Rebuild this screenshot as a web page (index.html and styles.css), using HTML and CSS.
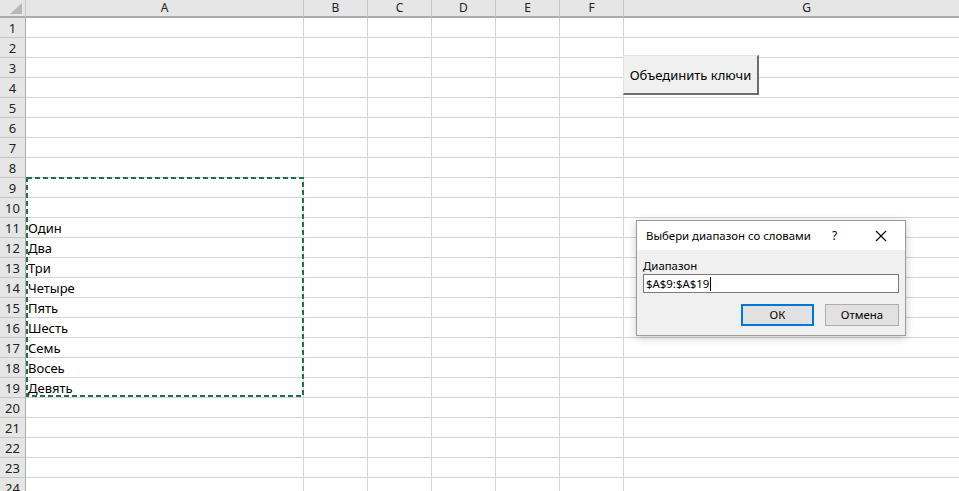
FILE: index.html
```html
<!DOCTYPE html>
<html lang="ru">
<head>
<meta charset="utf-8">
<link rel="stylesheet" href="styles.css">
</head>
<body>
<div class="sheet">
  <div class="row head">
    <div class="corner"><svg width="26" height="18" viewBox="0 0 26 18"><polygon points="22,3 22,14 10,14" fill="#b8b8b8"/></svg></div>
    <div class="ch">A</div><div class="ch">B</div><div class="ch">C</div><div class="ch">D</div><div class="ch">E</div><div class="ch">F</div><div class="ch">G</div>
  </div>
  <div class="row"><div class="rh">1</div><div class="c"></div><div class="c"></div><div class="c"></div><div class="c"></div><div class="c"></div><div class="c"></div><div class="c"></div></div>
  <div class="row"><div class="rh">2</div><div class="c"></div><div class="c"></div><div class="c"></div><div class="c"></div><div class="c"></div><div class="c"></div><div class="c"></div></div>
  <div class="row"><div class="rh">3</div><div class="c"></div><div class="c"></div><div class="c"></div><div class="c"></div><div class="c"></div><div class="c"></div><div class="c"></div></div>
  <div class="row"><div class="rh">4</div><div class="c"></div><div class="c"></div><div class="c"></div><div class="c"></div><div class="c"></div><div class="c"></div><div class="c"></div></div>
  <div class="row"><div class="rh">5</div><div class="c"></div><div class="c"></div><div class="c"></div><div class="c"></div><div class="c"></div><div class="c"></div><div class="c"></div></div>
  <div class="row"><div class="rh">6</div><div class="c"></div><div class="c"></div><div class="c"></div><div class="c"></div><div class="c"></div><div class="c"></div><div class="c"></div></div>
  <div class="row"><div class="rh">7</div><div class="c"></div><div class="c"></div><div class="c"></div><div class="c"></div><div class="c"></div><div class="c"></div><div class="c"></div></div>
  <div class="row"><div class="rh">8</div><div class="c"></div><div class="c"></div><div class="c"></div><div class="c"></div><div class="c"></div><div class="c"></div><div class="c"></div></div>
  <div class="row"><div class="rh">9</div><div class="c"></div><div class="c"></div><div class="c"></div><div class="c"></div><div class="c"></div><div class="c"></div><div class="c"></div></div>
  <div class="row"><div class="rh">10</div><div class="c"></div><div class="c"></div><div class="c"></div><div class="c"></div><div class="c"></div><div class="c"></div><div class="c"></div></div>
  <div class="row"><div class="rh">11</div><div class="c">Один</div><div class="c"></div><div class="c"></div><div class="c"></div><div class="c"></div><div class="c"></div><div class="c"></div></div>
  <div class="row"><div class="rh">12</div><div class="c">Два</div><div class="c"></div><div class="c"></div><div class="c"></div><div class="c"></div><div class="c"></div><div class="c"></div></div>
  <div class="row"><div class="rh">13</div><div class="c">Три</div><div class="c"></div><div class="c"></div><div class="c"></div><div class="c"></div><div class="c"></div><div class="c"></div></div>
  <div class="row"><div class="rh">14</div><div class="c">Четыре</div><div class="c"></div><div class="c"></div><div class="c"></div><div class="c"></div><div class="c"></div><div class="c"></div></div>
  <div class="row"><div class="rh">15</div><div class="c">Пять</div><div class="c"></div><div class="c"></div><div class="c"></div><div class="c"></div><div class="c"></div><div class="c"></div></div>
  <div class="row"><div class="rh">16</div><div class="c">Шесть</div><div class="c"></div><div class="c"></div><div class="c"></div><div class="c"></div><div class="c"></div><div class="c"></div></div>
  <div class="row"><div class="rh">17</div><div class="c">Семь</div><div class="c"></div><div class="c"></div><div class="c"></div><div class="c"></div><div class="c"></div><div class="c"></div></div>
  <div class="row"><div class="rh">18</div><div class="c">Восеь</div><div class="c"></div><div class="c"></div><div class="c"></div><div class="c"></div><div class="c"></div><div class="c"></div></div>
  <div class="row"><div class="rh">19</div><div class="c">Девять</div><div class="c"></div><div class="c"></div><div class="c"></div><div class="c"></div><div class="c"></div><div class="c"></div></div>
  <div class="row"><div class="rh">20</div><div class="c"></div><div class="c"></div><div class="c"></div><div class="c"></div><div class="c"></div><div class="c"></div><div class="c"></div></div>
  <div class="row"><div class="rh">21</div><div class="c"></div><div class="c"></div><div class="c"></div><div class="c"></div><div class="c"></div><div class="c"></div><div class="c"></div></div>
  <div class="row"><div class="rh">22</div><div class="c"></div><div class="c"></div><div class="c"></div><div class="c"></div><div class="c"></div><div class="c"></div><div class="c"></div></div>
  <div class="row"><div class="rh">23</div><div class="c"></div><div class="c"></div><div class="c"></div><div class="c"></div><div class="c"></div><div class="c"></div><div class="c"></div></div>
  <div class="row"><div class="rh">24</div><div class="c"></div><div class="c"></div><div class="c"></div><div class="c"></div><div class="c"></div><div class="c"></div><div class="c"></div></div>

  <svg class="ants" width="280" height="222" viewBox="0 0 280 222"><rect x="1" y="1" width="276" height="218" fill="none" stroke="#217346" stroke-width="2" stroke-dasharray="5 3"/></svg>

  <button class="macro">Объединить ключи</button>

  <div class="dialog">
    <div class="titlebar">
      <span class="title">Выбери диапазон со словами</span>
      <span class="help">?</span>
      <svg class="close" width="12" height="12" viewBox="0 0 12 12"><path d="M1 1L11 11M11 1L1 11" stroke="#000" stroke-width="1.1" fill="none"/></svg>
    </div>
    <div class="body">
      <div class="label">Диапазон</div>
      <div class="input">$A$9:$A$19<span class="caret"></span></div>
      <div class="buttons">
        <div class="btn ok">ОК</div>
        <div class="btn">Отмена</div>
      </div>
    </div>
  </div>
</div>
</body>
</html>
```

FILE: styles.css
```css
html, body {
  margin: 0;
  padding: 0;
  background: #fff;
  overflow: hidden;
}
body {
  font-family: "Noto Sans", "Liberation Sans", sans-serif;
  color: #000;
}
.sheet {
  position: relative;
  width: 959px;
  height: 491px;
  overflow: hidden;
}
.row {
  display: grid;
  grid-template-columns: 26px 278px 64px 64px 64px 64px 64px 366px;
  height: 20px;
}
.row.head {
  height: 18px;
}
.corner {
  background: #e6e6e6;
  border-right: 1px solid #c6c6c6;
  border-bottom: 2px solid #ababab;
  box-sizing: border-box;
  height: 18px;
  overflow: hidden;
}
.corner svg { display: block; }
.ch {
  background: #e6e6e6;
  border-right: 1px solid #c6c6c6;
  border-bottom: 2px solid #ababab;
  box-sizing: border-box;
  height: 18px;
  font-size: 12px;
  line-height: 16px;
  text-align: center;
  color: #222;
}
.rh {
  background: #e6e6e6;
  border-right: 1px solid #ababab;
  border-bottom: 1px solid #c6c6c6;
  box-sizing: border-box;
  height: 20px;
  font-size: 13px;
  line-height: 21px;
  text-align: center;
  color: #222;
}
.c {
  border-right: 1px solid #d4d4d4;
  border-bottom: 1px solid #d4d4d4;
  box-sizing: border-box;
  height: 20px;
  font-size: 13px;
  line-height: 21px;
  padding-left: 2px;
  white-space: nowrap;
}
.ants {
  position: absolute;
  left: 26px;
  top: 177px;
}
.macro {
  position: absolute;
  left: 623px;
  top: 55px;
  width: 136px;
  height: 40px;
  margin: 0;
  padding: 0;
  background: #f0f0f0;
  border-style: solid;
  border-width: 1px 2px 2px 1px;
  border-color: #e3e3e3 #6d6d6d #6d6d6d #e3e3e3;
  font-family: "Noto Sans", "Liberation Sans", sans-serif;
  font-size: 13px;
  color: #000;
}
.dialog {
  position: absolute;
  left: 636px;
  top: 220px;
  width: 270px;
  height: 116px;
  box-sizing: border-box;
  border: 1px solid #9a9a9a;
  background: #f0f0f0;
  box-shadow: 0 2px 8px rgba(0,0,0,0.22);
  display: flex;
  flex-direction: column;
}
.titlebar {
  height: 29px;
  background: #fff;
  display: flex;
  align-items: center;
  font-size: 11.4px;
  padding-left: 9px;
}
.title { flex: 1; }
.help { width: 12px; margin-right: 31px; font-size: 12px; }
.close { margin-right: 18px; }
.body {
  flex: 1;
  padding: 8px 6px 0 6px;
  font-size: 11.4px;
  display: flex;
  flex-direction: column;
}
.label {
  line-height: 15px;
  height: 16px;
}
.input {
  height: 19px;
  box-sizing: border-box;
  background: #fff;
  border: 1px solid #7a7a7a;
  line-height: 17px;
  padding-left: 2px;
  display: flex;
  align-items: center;
}
.caret {
  display: inline-block;
  width: 1px;
  height: 14px;
  background: #000;
  margin-left: 1px;
}
.buttons {
  display: flex;
  justify-content: flex-end;
  gap: 11px;
  margin-top: 11px;
}
.btn {
  width: 74px;
  height: 22px;
  box-sizing: border-box;
  background: #e1e1e1;
  border: 1px solid #adadad;
  text-align: center;
  line-height: 20px;
}
.btn.ok {
  width: 73px;
  border: 2px solid #0078d7;
  line-height: 18px;
}
```
